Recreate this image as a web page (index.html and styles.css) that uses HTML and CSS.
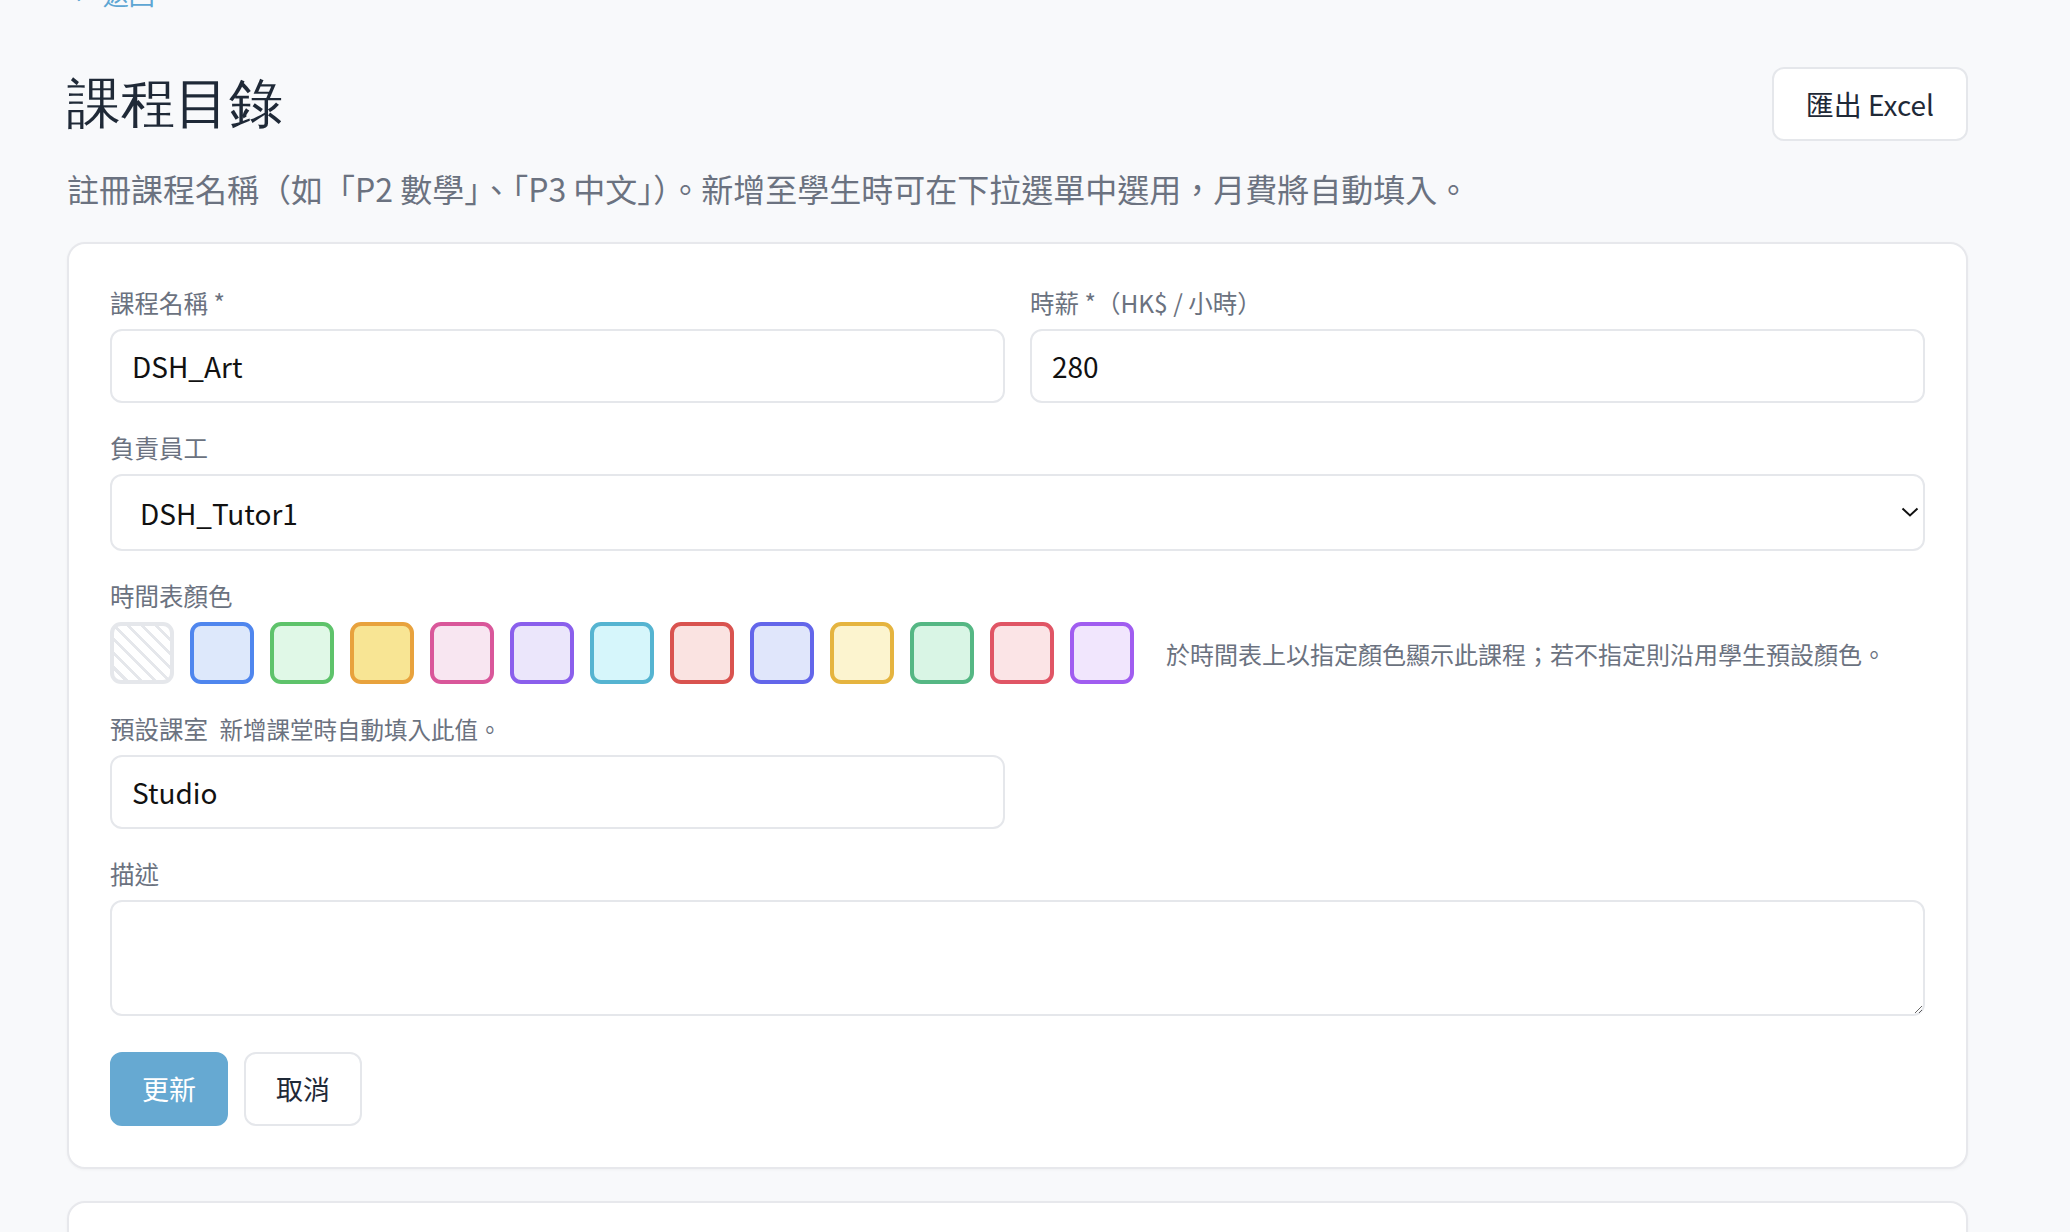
FILE: index.html
```html
<!DOCTYPE html>
<html lang="zh-Hant">
<head>
    <meta charset="UTF-8">
    <meta name="viewport" content="width=device-width, initial-scale=1.0">
    <title>課程目錄</title>
    <link rel="stylesheet" href="styles.css">
</head>
<body>
    <div class="page">
        <a class="back" href="#">← 返回</a>
        <header class="page-head">
            <h1>課程目錄</h1>
            <button class="btn">匯出 Excel</button>
        </header>
        <p class="intro">註冊課程名稱（如「P2 數學」、「P3 中文」）。新增至學生時可在下拉選單中選用，月費將自動填入。</p>

        <form class="card">
            <div class="row">
                <div class="field">
                    <label>課程名稱 *</label>
                    <input type="text" value="DSH_Art">
                </div>
                <div class="field">
                    <label>時薪 *（HK$ / 小時）</label>
                    <input type="text" value="280">
                </div>
            </div>

            <div class="field">
                <label>負責員工</label>
                <div class="select-wrap">
                    <select>
                        <option>DSH_Tutor1</option>
                    </select>
                    <svg class="chevron" width="18" height="12" viewBox="0 0 18 12"><path d="M1.5 2.5 L9 9.5 L16.5 2.5" fill="none" stroke="#111" stroke-width="2"/></svg>
                </div>
            </div>

            <div class="field">
                <label>時間表顏色</label>
                <div class="swatches">
                    <span class="swatch none"></span>
                    <span class="swatch" style="border-color:#4f86ee;background:#dde8fb"></span>
                    <span class="swatch" style="border-color:#5ec36b;background:#e0f8e7"></span>
                    <span class="swatch" style="border-color:#e8a23d;background:#f8e594"></span>
                    <span class="swatch" style="border-color:#d9579a;background:#f8e6f1"></span>
                    <span class="swatch" style="border-color:#8a5fec;background:#ebe6fb"></span>
                    <span class="swatch" style="border-color:#55b4d1;background:#d6f6fb"></span>
                    <span class="swatch" style="border-color:#d9534f;background:#fae3e1"></span>
                    <span class="swatch" style="border-color:#6366ea;background:#e0e6fb"></span>
                    <span class="swatch" style="border-color:#e5b43f;background:#fcf4cf"></span>
                    <span class="swatch" style="border-color:#55b784;background:#d9f5e5"></span>
                    <span class="swatch" style="border-color:#e05565;background:#fbe4e6"></span>
                    <span class="swatch" style="border-color:#a05df0;background:#f1e6fd"></span>
                    <span class="hint">於時間表上以指定顏色顯示此課程；若不指定則沿用學生預設顏色。</span>
                </div>
            </div>

            <div class="row">
                <div class="field">
                    <label>預設課室 <span class="label-hint">新增課堂時自動填入此值。</span></label>
                    <input type="text" value="Studio">
                </div>
            </div>

            <div class="field">
                <label>描述</label>
                <textarea></textarea>
            </div>

            <div class="actions">
                <button type="button" class="btn primary">更新</button>
                <button type="button" class="btn">取消</button>
            </div>
        </form>

        <div class="card next"></div>
    </div>
</body>
</html>
```

FILE: styles.css
```css
body {
    margin: 0;
    background-color: #f8f9fb;
    color: #1f2937;
    font-family: "Noto Sans CJK TC", "Noto Sans", sans-serif;
    font-size: 30px;
}
.page {
    padding: 0 102px 0 67px;
}
.back {
    display: block;
    margin-top: -26px;
    color: #5ea6d3;
    font-size: 26px;
    line-height: 39px;
    text-decoration: none;
    padding-left: 4px;
}
.page-head {
    display: flex;
    justify-content: space-between;
    align-items: center;
    margin-top: 54px;
}
.page-head h1 {
    margin: 0;
    font-family: "Liberation Serif", serif;
    font-size: 54px;
    font-weight: 400;
    line-height: 74px;
    color: #1f2937;
}
.intro {
    margin: 23px 0 30px;
    color: #6b7280;
    font-size: 32px;
    line-height: 48px;
}
.btn {
    font-family: inherit;
    font-size: 27px;
    line-height: 42px;
    padding: 14px 32px;
    background-color: white;
    color: #1f2937;
    border: 2px solid #e5e7eb;
    border-radius: 12px;
    cursor: pointer;
}
.page-head .btn {
    font-size: 28px;
    padding: 14px 32px;
}
.btn.primary {
    background-color: #66a9d2;
    border-color: #66a9d2;
    color: white;
}
.card {
    display: block;
    background-color: white;
    border: 2px solid #e7e8ec;
    border-radius: 18px;
    padding: 41px;
    box-shadow: 0 1px 3px rgba(0, 0, 0, 0.04);
}
.card.next {
    margin-top: 32px;
    height: 120px;
}
.row {
    display: grid;
    grid-template-columns: 1fr 1fr;
    column-gap: 25px;
}
.field {
    margin-bottom: 27px;
}
.field label {
    display: block;
    color: #6b7280;
    font-size: 24.5px;
    line-height: 36px;
    margin-bottom: 8px;
}
.label-hint {
    font-size: 23.5px;
    margin-left: 6px;
}
.field input,
.field select,
.field textarea {
    box-sizing: border-box;
    width: 100%;
    font-family: inherit;
    font-size: 28px;
    color: #111;
    background-color: white;
    border: 2px solid #e5e7eb;
    border-radius: 12px;
    outline: none;
}
.field input {
    height: 74px;
    padding: 0 20px;
}
.select-wrap {
    position: relative;
}
.field select {
    appearance: none;
    -webkit-appearance: none;
    height: 77px;
    padding: 0 28px;
}
.chevron {
    position: absolute;
    right: 6px;
    top: 32px;
    pointer-events: none;
}
.field textarea {
    display: block;
    height: 116px;
    padding: 12px 20px;
    resize: vertical;
}
.swatches {
    display: flex;
    align-items: center;
    gap: 16px;
}
.swatch {
    box-sizing: border-box;
    width: 64px;
    height: 62px;
    border: 4px solid;
    border-radius: 11px;
}
.swatch.none {
    border-color: #e5e7eb;
    background: repeating-linear-gradient(45deg, #ffffff 0 7px, #e5e7eb 7px 10px);
}
.hint {
    margin-left: 16px;
    color: #6b7280;
    font-size: 24px;
}
.actions {
    display: flex;
    gap: 16px;
    margin-top: 36px;
}
.actions .btn {
    padding: 14px 30px;
}
```
